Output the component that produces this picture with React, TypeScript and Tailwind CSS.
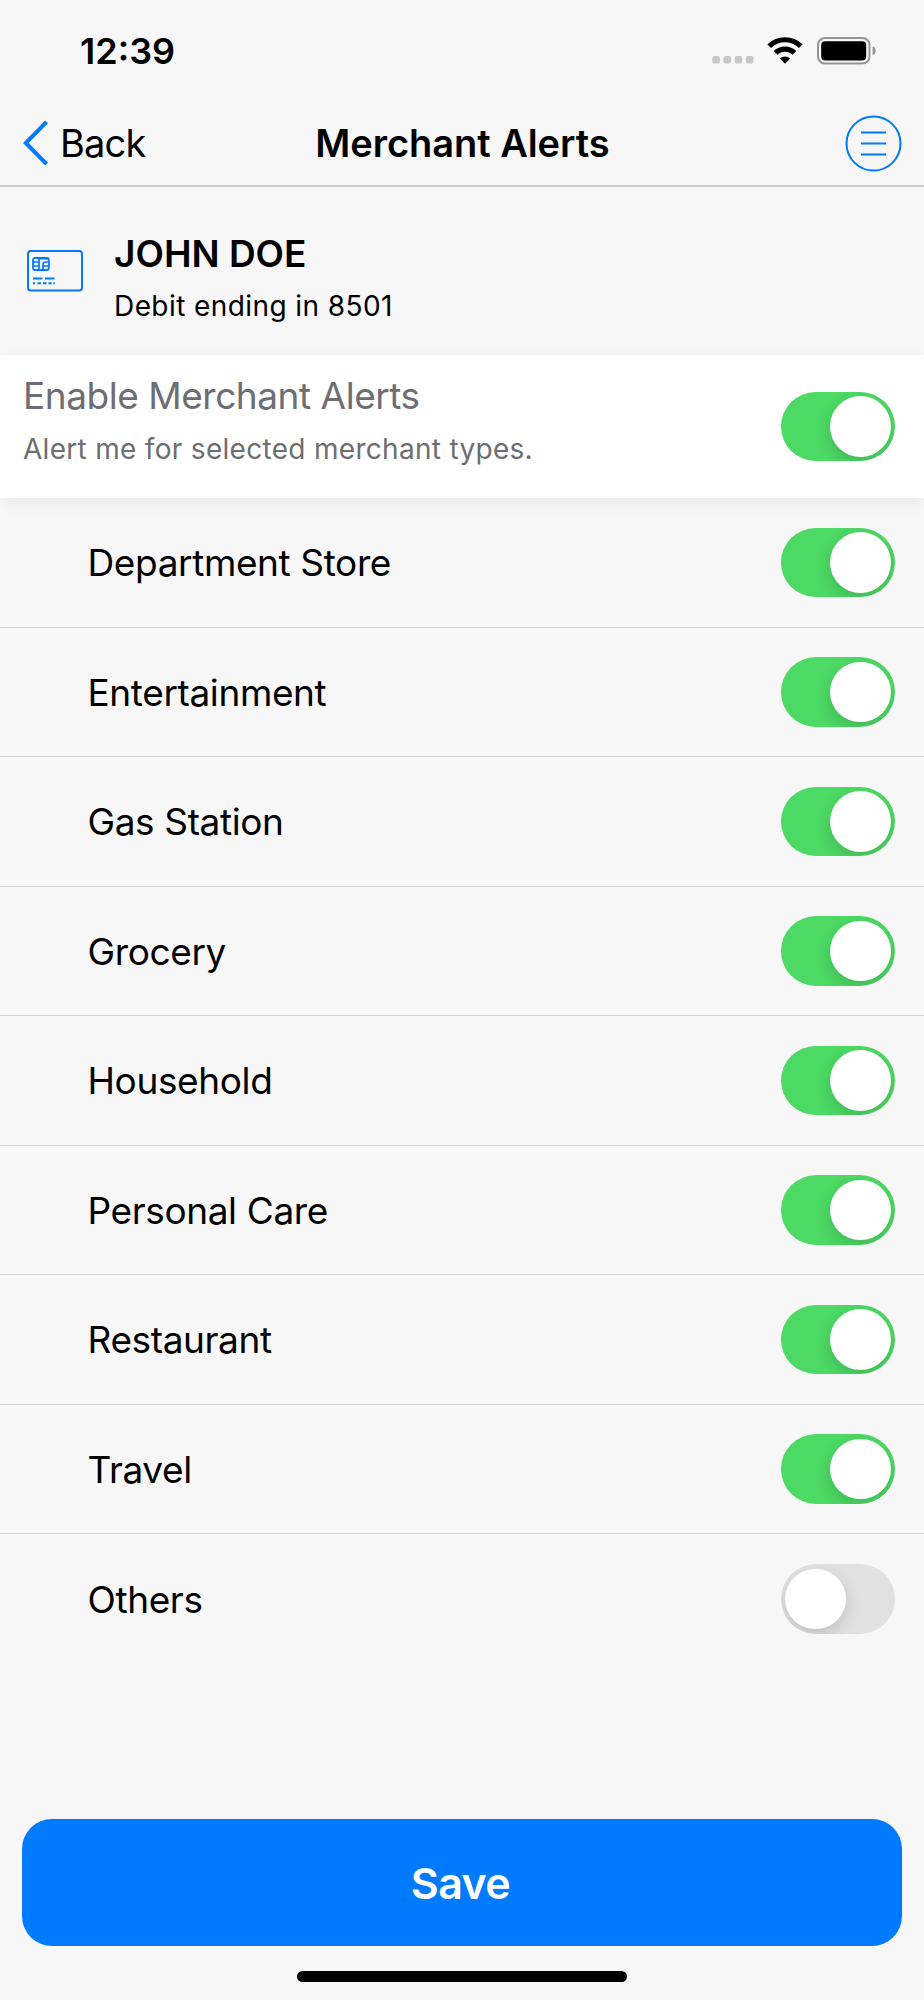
import React, { useState } from 'react';

interface Merchant {
  name: string;
  enabled: boolean;
}

const MERCHANTS: Merchant[] = [
  { name: 'Department Store', enabled: true },
  { name: 'Entertainment', enabled: true },
  { name: 'Gas Station', enabled: true },
  { name: 'Grocery', enabled: true },
  { name: 'Household', enabled: true },
  { name: 'Personal Care', enabled: true },
  { name: 'Restaurant', enabled: true },
  { name: 'Travel', enabled: true },
  { name: 'Others', enabled: false },
];

const Toggle: React.FC<{ on: boolean; label: string; onChange: () => void }> = ({ on, label, onChange }) => (
  <button
    role="switch"
    aria-checked={on}
    aria-label={label}
    onClick={onChange}
    className={`flex h-[69.5px] w-[114px] shrink-0 items-center overflow-hidden rounded-full pl-[4px] pr-[4.5px] ${on ? 'justify-end bg-[#4cd964]' : 'justify-start bg-[#e1e1e1]'}`}
  >
    <span className="size-[60.5px] rounded-full bg-white shadow-[0_6px_16px_rgba(0,0,0,0.15)]" />
  </button>
);

const StatusBar = () => (
  <div className="flex h-[100px] items-center justify-between pt-px pl-[80px] pr-[47px]">
    <span className="text-[36px] font-semibold leading-none">12:39</span>
    <div className="flex items-center">
      <svg width="42" height="28" viewBox="0 0 42 28" fill="#c7c7c7">
        <rect x="0.3" y="19" width="7.6" height="7.4" rx="2.2" />
        <rect x="11.5" y="19" width="7.6" height="7.4" rx="2.2" />
        <rect x="22.7" y="19" width="7.6" height="7.4" rx="2.2" />
        <rect x="33.9" y="19" width="7.6" height="7.4" rx="2.2" />
      </svg>
      <svg className="ml-[13px]" width="36" height="28" viewBox="0 0 36 28" fill="none" stroke="#000">
        <path d="M2.2 9.2a22.6 22.6 0 0 1 31.6 0" strokeWidth="5.2" />
        <path d="M8.5 15.9a13.6 13.6 0 0 1 19 0" strokeWidth="5.2" />
        <path d="M18 26.8l-5.2-5.2a7.4 7.4 0 0 1 10.4 0z" fill="#000" stroke="none" />
      </svg>
      <svg className="ml-[14px]" width="60" height="28" viewBox="0 0 60 28">
        <rect x="1" y="1" width="51.5" height="25.6" rx="7" fill="none" stroke="#959595" strokeWidth="2" />
        <rect x="4.2" y="4.2" width="45" height="19.2" rx="4" fill="#000" />
        <path d="M55.6 9.3c4 1.4 4 7.6 0 9z" fill="#959595" />
      </svg>
    </div>
  </div>
);

const NavBar = () => (
  <header className="grid h-[87px] grid-cols-[1fr_auto_1fr] items-center border-b-2 border-[#cbcbcb] pt-px pl-[23px] pr-[22px]">
    <button className="flex items-center gap-[11px] text-left">
      <svg width="26" height="46" viewBox="0 0 26 46" fill="none" stroke="#007aff" strokeWidth="4">
        <path d="M23.6 1.8L2.8 23l20.8 21.2" />
      </svg>
      <span className="text-[38px] font-normal leading-none tracking-[-0.8px]">Back</span>
    </button>
    <h1 className="text-[38px] font-semibold leading-none tracking-[-0.05px]">Merchant Alerts</h1>
    <button aria-label="Menu" className="justify-self-end">
      <svg width="57" height="57" viewBox="0 0 57 57" fill="none" stroke="#007aff" strokeWidth="2">
        <circle cx="28.5" cy="28.5" r="27" />
        <path d="M16 17.5h25M16 28.5h25M16 39.5h25" />
      </svg>
    </button>
  </header>
);

const CardIcon = () => (
  <svg width="56" height="42" viewBox="0 0 56 42" fill="none" stroke="#007aff">
    <rect x="1" y="1" width="54" height="39.5" rx="2.8" strokeWidth="2" />
    <rect x="6" y="8" width="15.8" height="12" rx="2" strokeWidth="1.8" />
    <path d="M12 8v12M6 12h6M6 16h6M16 20v-5.5q0-2.5 2.5-2.5h3.3M16 16h5.8M12 8.6h9" strokeWidth="1.7" />
    <path d="M6 28.5h9.5M18 28.5h9.5" strokeWidth="2" />
    <path d="M6 33.2h2M10.5 33.2h3.5M16 33.2h3.5M21.5 33.2h3M26.3 33.2h1.5" strokeWidth="2" />
  </svg>
);

export default function App() {
  const [allEnabled, setAllEnabled] = useState(true);
  const [merchants, setMerchants] = useState(MERCHANTS);

  const toggleMerchant = (name: string) => {
    setMerchants(merchants.map((m) => (m.name === name ? { ...m, enabled: !m.enabled } : m)));
  };

  return (
    <div className="flex h-[2000px] w-[924px] flex-col overflow-hidden bg-[#f7f7f7] font-['Inter',sans-serif] text-black">
      <StatusBar />
      <NavBar />

      <section className="flex h-[168px] shrink-0 items-center pl-[27px]">
        <CardIcon />
        <div className="mt-[13px] ml-[31px] flex flex-col gap-[20px]">
          <h2 className="text-[37px] font-semibold leading-none">JOHN DOE</h2>
          <p className="text-[28px] leading-none tracking-[0.42px]">Debit ending in 8501</p>
        </div>
      </section>

      <section className="relative flex h-[143px] shrink-0 items-center justify-between bg-white pl-[23px] pr-[29px] text-[#6d6d72] shadow-[0_5px_16px_rgba(0,0,0,0.055)]">
        <div className="mb-[14px] flex flex-col gap-[21px]">
          <h2 className="text-[37px] leading-none tracking-[-0.46px]">Enable Merchant Alerts</h2>
          <p className="text-[28px] leading-none tracking-[0.3px]">Alert me for selected merchant types.</p>
        </div>
        <Toggle on={allEnabled} label="Enable Merchant Alerts" onChange={() => setAllEnabled(!allEnabled)} />
      </section>

      <ul className="shrink-0">
        {merchants.map((m) => (
          <li
            key={m.name}
            className="flex h-[129.5px] items-center justify-between border-b border-[#d4d4d6] pl-[87.5px] pr-[29px] last:border-b-0"
          >
            <span className="pt-px text-[37px] leading-none tracking-[-0.38px]">{m.name}</span>
            <Toggle on={m.enabled} label={m.name} onChange={() => toggleMerchant(m.name)} />
          </li>
        ))}
      </ul>

      <footer className="mt-auto flex shrink-0 flex-col items-center px-[22px] pb-[18px]">
        <button className="h-[127px] w-full rounded-[30px] bg-[#007aff] pt-[2px] pr-[3px] text-[43px] font-semibold leading-none tracking-[-0.6px] text-white">
          Save
        </button>
        <div className="mt-[25px] h-[11px] w-[330px] rounded-full bg-black" />
      </footer>
    </div>
  );
}
